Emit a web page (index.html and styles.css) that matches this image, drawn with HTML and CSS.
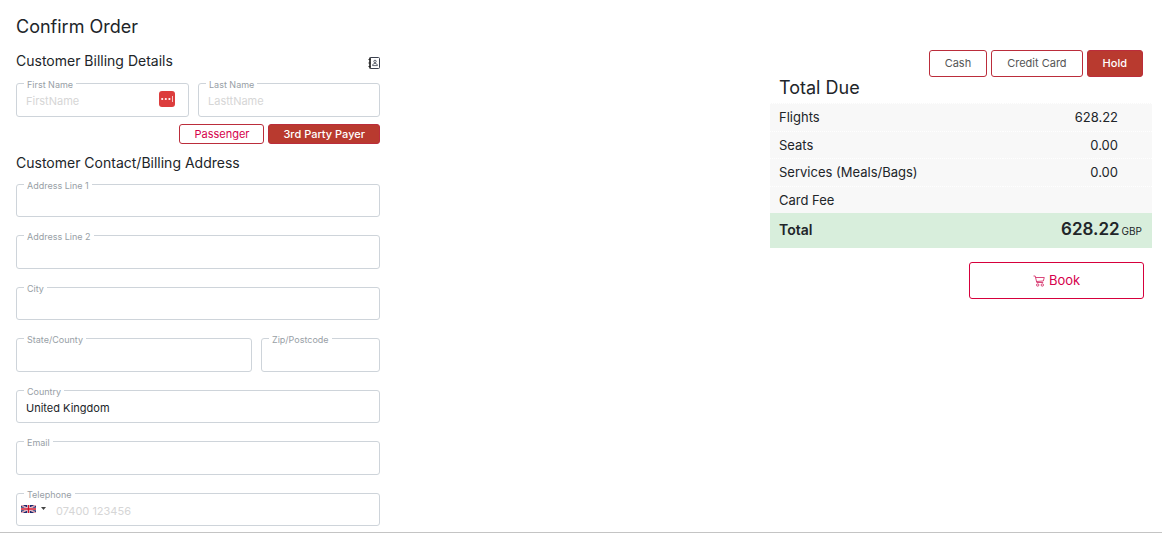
FILE: index.html
```
<!DOCTYPE html>
<html lang="en">
    <head>
        <meta charset="UTF-8">
        <title>Confirm Order</title>
        <link rel="stylesheet" href="styles.css">
    </head>
    <body>
        <main class="order">
            <form class="billing" id="billing">
                <h1>Confirm Order</h1>
                <div class="heading">
                    <h2>Customer Billing Details</h2>
                    <button type="button" class="contacts" aria-label="Address book">
                        <svg width="12" height="12" viewBox="0 0 12 12" fill="none" stroke="#3c4250">
                            <rect x="2" y="0.5" width="9.5" height="11" rx="1" />
                            <path d="M2 0.5v11" stroke="#222" stroke-width="1.4" />
                            <path d="M0.5 2.5h2M0.5 6h2M0.5 9.5h2" stroke="#222" />
                            <circle cx="7" cy="4.4" r="1.2" stroke-width="0.8" />
                            <path d="M4.6 8.6c0-1.500 1-2.100 2.400-2.100s2.400.6 2.400 2.100z" stroke-width="0.8" />
                        </svg>
                    </button>
                </div>
                <div class="row names">
                    <div class="field">
                        <label for="firstName">First Name</label>
                        <input type="text" id="firstName" placeholder="FirstName">
                        <svg class="filler" width="16" height="16" viewBox="0 0 16 16">
                            <rect width="16" height="16" rx="3" fill="#dc3d3d" />
                            <circle cx="3.2" cy="8" r="1.1" fill="#fff" />
                            <circle cx="6.8" cy="8" r="1.1" fill="#fff" />
                            <circle cx="10.4" cy="8" r="1.1" fill="#fff" />
                            <path d="M13.5 5v6" stroke="#f6c4c4" />
                        </svg>
                    </div>
                    <div class="field">
                        <label for="lastName">Last Name</label>
                        <input type="text" id="lastName" placeholder="LasttName">
                    </div>
                </div>
                <div class="payer">
                    <button type="button" class="btn passenger">Passenger</button>
                    <button type="button" class="btn active">3rd Party Payer</button>
                </div>
                <h2>Customer Contact/Billing Address</h2>
                <div class="address">
                    <div class="field">
                        <label for="address1">Address Line 1</label>
                        <input type="text" id="address1">
                    </div>
                    <div class="field">
                        <label for="address2">Address Line 2</label>
                        <input type="text" id="address2">
                    </div>
                    <div class="field">
                        <label for="city">City</label>
                        <input type="text" id="city">
                    </div>
                    <div class="row region">
                        <div class="field">
                            <label for="state">State/County</label>
                            <input type="text" id="state">
                        </div>
                        <div class="field">
                            <label for="zip">Zip/Postcode</label>
                            <input type="text" id="zip">
                        </div>
                    </div>
                    <div class="field">
                        <label for="country">Country</label>
                        <select id="country">
                            <option>United Kingdom</option>
                        </select>
                    </div>
                    <div class="field">
                        <label for="email">Email</label>
                        <input type="email" id="email">
                    </div>
                    <div class="field phone">
                        <label for="telephone">Telephone</label>
                        <input type="tel" id="telephone" placeholder="07400 123456">
                        <button type="button" class="dial" aria-label="United Kingdom">
                            <svg width="15" height="8" viewBox="0 0 15 8">
                                <rect width="15" height="8" fill="#1d2a6e" />
                                <path d="M0 0l15 8M15 0L0 8" stroke="#fff" stroke-width="1.4" />
                                <path d="M0 0l15 8M15 0L0 8" stroke="#d0142c" stroke-width="0.5" />
                                <path d="M7.5 0v8M0 4h15" stroke="#fff" stroke-width="2.6" />
                                <path d="M7.5 0v8M0 4h15" stroke="#d0142c" stroke-width="1.5" />
                            </svg>
                            <svg width="5" height="3" viewBox="0 0 5 3"><path d="M0 0h5L2.5 3z" fill="#444" /></svg>
                        </button>
                    </div>
                </div>
            </form>
            <section class="summary">
                <div class="methods">
                    <button type="button" class="btn">Cash</button>
                    <button type="button" class="btn">Credit Card</button>
                    <button type="button" class="btn active">Hold</button>
                </div>
                <h1>Total Due</h1>
                <table>
                    <tbody>
                        <tr><th scope="row">Flights</th><td>628.22</td></tr>
                        <tr><th scope="row">Seats</th><td>0.00</td></tr>
                        <tr><th scope="row">Services (Meals/Bags)</th><td>0.00</td></tr>
                        <tr><th scope="row">Card Fee</th><td></td></tr>
                    </tbody>
                    <tfoot>
                        <tr><th scope="row">Total</th><td><b>628.22</b><small>GBP</small></td></tr>
                    </tfoot>
                </table>
                <button type="submit" form="billing" class="book">
                    <svg width="12" height="12" viewBox="0 0 12 12" fill="none" stroke="#d6336c" stroke-width="0.9">
                        <path d="M0.5 1h1.7l1.6 6.500h6.400" />
                        <path d="M2.5 2.500h8.800l-1 3.500-7 .5" />
                        <circle cx="4.7" cy="10" r="1.2" />
                        <circle cx="9.3" cy="10" r="1.2" />
                    </svg>
                    Book
                </button>
            </section>
        </main>
    </body>
</html>
```
FILE: styles.css
```
* { box-sizing: border-box; margin: 0; padding: 0; }
body { font-family: Inter, sans-serif; font-size: 12px; line-height: 1.5; color: #212529; background: #fff; }
button, input, select { font: inherit; color: inherit; }
button { cursor: pointer; }
h1 { font-size: 18px; font-weight: 400; line-height: 24px; }
h2 { font-size: 14px; font-weight: 400; line-height: 20px; }

.order { display: grid; grid-template-columns: 364fr 390fr 382fr; padding: 15px 10px 6px 16px; border-bottom: 1px solid #c4c4c4; }

.heading { display: flex; align-items: center; justify-content: space-between; margin: 12px 0; }
.contacts { display: flex; border: 0; background: none; margin-top: 4px; }

.row { display: grid; column-gap: 9px; }
.names { grid-template-columns: 173fr 182fr; }
.region { grid-template-columns: 236fr 119fr; }

.field { position: relative; display: flex; }
.field input, .field select { width: 100%; min-width: 0; padding: 9px 9px 6px; border: 1px solid #ced4da; border-radius: 3px; background: #fff; font-size: 11px; line-height: 1.5; appearance: none; outline: 0; }
.field ::placeholder { color: #d6d6d6; opacity: 1; }
.field label { position: absolute; top: -4px; left: 8px; padding: 0 3px; background: #fff; color: #98a0a6; font-size: 9px; line-height: 12px; }
.filler { position: absolute; top: 8px; right: 14px; }

.btn { border: 1px solid #bb2d3b; border-radius: 3px; background: #fff; color: #555; font-size: 11px; }
.btn.active { background: #b93a2f; color: #fff; font-weight: 500; }
.payer { display: flex; justify-content: flex-end; gap: 4px; margin: 7px 0 9px; }
.payer .btn { padding: 0 14px; line-height: 18px; }
.payer .passenger { color: #d6004c; }

.address { display: grid; gap: 18px; margin-top: 11px; }
.phone input { padding-left: 39px; }
.dial { position: absolute; top: 8px; left: 5px; display: flex; align-items: center; gap: 5px; height: 16px; border: 0; background: none; }

.summary { grid-column: 3; padding-top: 35px; }
.methods { display: flex; justify-content: flex-end; gap: 4px; padding-right: 9px; }
.methods .btn { padding: 0 15px; line-height: 25px; }
.summary h1 { padding-left: 9px; margin-bottom: 4px; line-height: 22px; }

table { width: 100%; border-collapse: separate; border-spacing: 0; font-size: 13px; }
th { text-align: left; font-weight: 400; }
td { text-align: right; }
tbody th, tbody td { padding: 4px 9px 3px; border-top: 1px dotted #fff; background: #f8f8f8; }
tbody td { padding-right: 34px; }
tfoot th, tfoot td { height: 35px; padding: 0 10px 2px 9px; background: #d8eedc; }
tfoot th { font-size: 14px; font-weight: 600; }
tfoot b { font-size: 17px; font-weight: 600; }
tfoot small { margin-left: 2px; font-size: 10px; }

.book { display: flex; align-items: center; justify-content: center; gap: 4px; width: 175px; height: 37px; margin: 14px 8px 0 auto; border: 1px solid #d6003c; border-radius: 3px; background: #fff; color: #d6004c; font-size: 13px; }
```
